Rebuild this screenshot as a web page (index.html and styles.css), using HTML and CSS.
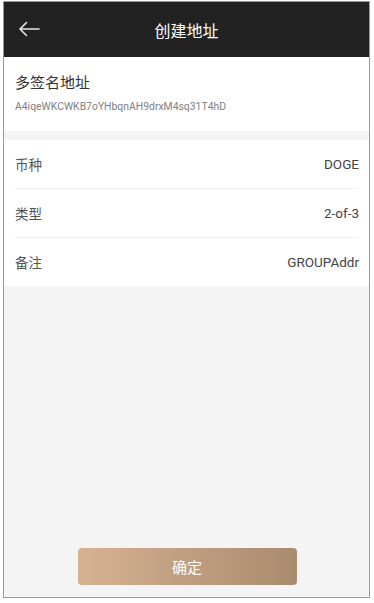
FILE: index.html
```html
<!DOCTYPE html>
<html lang="zh-CN">
<head>
    <meta charset="UTF-8">
    <meta name="viewport" content="width=device-width, initial-scale=1.0">
    <title>创建地址</title>
    <link rel="stylesheet" href="styles.css">
</head>
<body>
    <div class="frame">
        <div class="header">
            <span class="back">
                <svg width="22" height="16" viewBox="0 0 22 16">
                    <path d="M21 8H2M8.5 1.5L2 8l6.5 6.5" fill="none" stroke="#e6e6e6" stroke-width="1.6" stroke-linecap="round" stroke-linejoin="round"/>
                </svg>
            </span>
            <div class="title">创建地址</div>
        </div>

        <div class="address-card">
            <div class="address-title">多签名地址</div>
            <div class="address-value">A4iqeWKCWKB7oYHbqnAH9drxM4sq31T4hD</div>
        </div>

        <div class="info-list">
            <div class="info-row">
                <span class="info-label">币种</span>
                <span class="info-value">DOGE</span>
            </div>
            <div class="info-row">
                <span class="info-label">类型</span>
                <span class="info-value">2-of-3</span>
            </div>
            <div class="info-row">
                <span class="info-label">备注</span>
                <span class="info-value">GROUPAddr</span>
            </div>
        </div>

        <div class="footer">
            <button class="confirm-btn">确定</button>
        </div>
    </div>
</body>
</html>
```

FILE: styles.css
```css
html, body {
    margin: 0;
    padding: 0;
    background-color: #fff;
}
body {
    font-family: Roboto, "Noto Sans CJK SC", sans-serif;
    color: #333;
}
.frame {
    box-sizing: border-box;
    width: 367px;
    height: 597px;
    margin: 1px 4px 5px 3px;
    border: 1px solid #999;
    background-color: #f4f4f4;
    display: flex;
    flex-direction: column;
}
.header {
    height: 55px;
    background-color: #222;
    display: flex;
    align-items: center;
    justify-content: center;
    position: relative;
}
.back {
    position: absolute;
    left: 14px;
    top: 19px;
    display: flex;
}
.title {
    color: #fff;
    font-size: 16px;
}
.address-card {
    background-color: #fff;
    height: 74px;
    box-sizing: border-box;
    padding: 15px 11px 0;
}
.address-title {
    font-size: 15px;
    color: #333;
    line-height: 22px;
}
.address-value {
    font-size: 10.4px;
    color: #808080;
    margin-top: 5px;
    line-height: 16px;
}
.info-list {
    background-color: #fff;
    margin-top: 9px;
    padding: 0 10px 0 11px;
}
.info-row {
    height: 48px;
    display: flex;
    align-items: center;
    justify-content: space-between;
    font-size: 13.5px;
    border-bottom: 1px solid #f2f2f2;
}
.info-row:last-child {
    border-bottom: none;
}
.info-label {
    color: #555;
}
.info-value {
    color: #444;
}
.footer {
    margin-top: auto;
    padding-bottom: 12px;
    display: flex;
    justify-content: center;
}
.confirm-btn {
    width: 219px;
    height: 37px;
    border: none;
    border-radius: 4px;
    background: linear-gradient(to right, #d5b291, #a98b6f);
    color: #fff;
    font-family: Roboto, "Noto Sans CJK SC", sans-serif;
    font-size: 15px;
    margin-left: 1px;
}
```
